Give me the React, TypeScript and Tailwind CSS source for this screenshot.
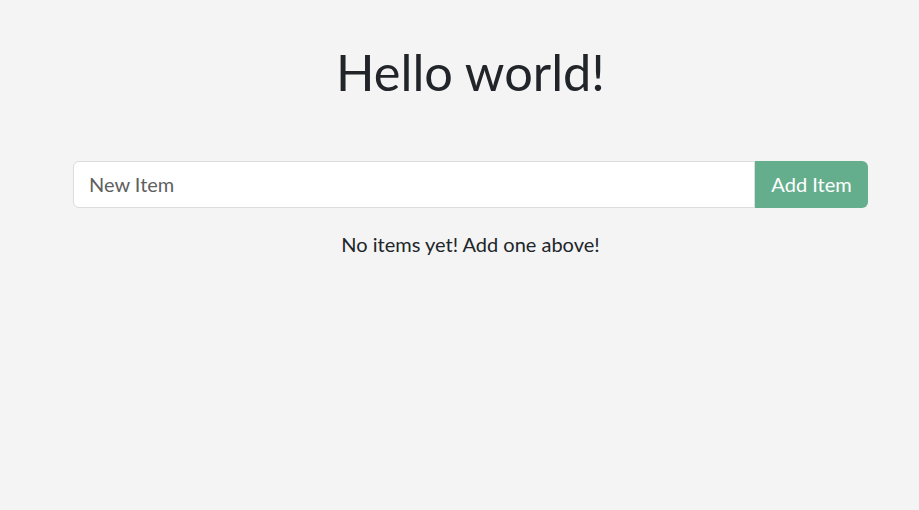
import { useState } from "react";

export default function App() {
    const [item, setItem] = useState("");
    const [items, setItems] = useState<string[]>([]);

    const addItem = () => {
        if (!item.trim()) return;
        setItems([...items, item.trim()]);
        setItem("");
    };

    return (
        <div
            className="min-h-[510px] w-full bg-[#f4f4f4] text-[#212529] pl-[73px] pr-[51px]"
            style={{ fontFamily: "Lato, 'Open Sans', sans-serif" }}
        >
            <h1 className="text-center text-[50.5px] leading-[1.2] pt-[42px] pb-[58px]">Hello world!</h1>

            <div className="flex w-full h-[47px]">
                <input
                    type="text"
                    placeholder="New Item"
                    value={item}
                    onChange={(e) => setItem(e.target.value)}
                    className="flex-1 min-w-0 bg-white border border-[#dcdcdc] rounded-l-[6px] px-[15px] text-[20px] text-[#495057] placeholder:text-[#5f5f5f] outline-none"
                />
                <button
                    className="w-[113px] bg-[#64ae8e] text-white text-[20px] rounded-r-[6px]"
                    onClick={addItem}
                >
                    Add Item
                </button>
            </div>

            {items.length === 0 ? (
                <p className="text-center text-[20px] mt-[21px]">No items yet! Add one above!</p>
            ) : (
                <ul className="mt-[21px]">
                    {items.map((it, i) => (
                        <li key={i} className="text-[20px]">{it}</li>
                    ))}
                </ul>
            )}
        </div>
    );
}
